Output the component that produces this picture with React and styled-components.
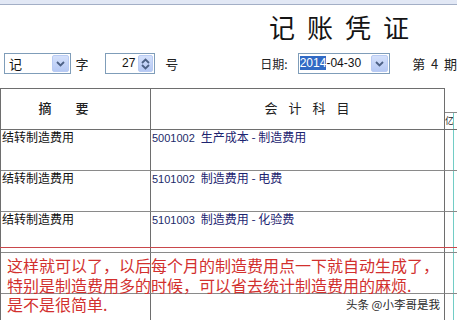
import React from 'react'
import styled, { createGlobalStyle } from 'styled-components'

const GlobalStyle = createGlobalStyle`
  html, body {
    margin: 0;
    padding: 0;
    background: #fff;
  }

  body {
    font-family: "Noto Sans CJK SC", "Liberation Sans", sans-serif;
    overflow: hidden;
  }
`

const rows = [
  { summary: '结转制造费用', code: '5001002', account: '生产成本 - 制造费用' },
  { summary: '结转制造费用', code: '5101002', account: '制造费用 - 电费' },
  { summary: '结转制造费用', code: '5101003', account: '制造费用 - 化验费' },
  { summary: '', code: '', account: '' },
  { summary: '', code: '', account: '' },
]

const Chevron = ({ up }) => (
  <svg width="9" height="6" viewBox="0 0 9 6">
    <polyline
      points={up ? '1,5 4.5,1.5 8,5' : '1,1 4.5,4.5 8,1'}
      fill="none"
      stroke="#4d6185"
      strokeWidth="1.8"
    />
  </svg>
)

const Page = styled.div`
  position: relative;
  width: 457px;
  height: 320px;
  overflow: hidden;
  background: #fff;
`

const TopStrip = styled.div`
  height: 4px;
  background: #e2e8f5;
  border-bottom: 1px solid #a3afc6;
`

const TitleRow = styled.div`
  display: flex;
  justify-content: flex-end;
  margin-top: 7px;
  padding-right: 36px;
`

const Title = styled.h1`
  margin: 0;
  font-size: 26px;
  line-height: 30px;
  font-weight: 400;
  letter-spacing: 12px;
  color: #141414;
`

const ToolBar = styled.div`
  display: flex;
  align-items: center;
  height: 21px;
  margin-top: 11px;
  padding-left: 4px;
`

const Label = styled.span`
  margin-left: ${p => p.$ml || 0}px;
  font-size: ${p => p.$size || 13}px;
  color: #222;
  white-space: pre;
`

const Field = styled.div`
  box-sizing: border-box;
  display: flex;
  align-items: center;
  width: ${p => p.$w}px;
  height: 21px;
  margin-left: ${p => p.$ml || 0}px;
  padding: 1px;
  border: 1px solid #7f9db9;
  background: #fff;
`

const FieldText = styled.span`
  flex: 1;
  padding: 0 ${p => p.$pr || 0}px 0 ${p => p.$pl || 0}px;
  text-align: ${p => p.$align || 'left'};
  font-family: ${p => (p.$latin ? '"Liberation Sans", sans-serif' : 'inherit')};
  font-size: ${p => p.$size || 13}px;
  line-height: 17px;
  color: #111;
`

const Selected = styled.span`
  background: #316ac5;
  color: #fff;
`

const DropButton = styled.div`
  box-sizing: border-box;
  display: flex;
  flex-direction: column;
  align-items: center;
  justify-content: center;
  width: ${p => p.$w || 17}px;
  height: 17px;
  border-radius: 2px;
  background: linear-gradient(#d4e0fb, #b6c9f4);
  border: 1px solid #b9cbf3;
`

const Table = styled.div`
  display: grid;
  grid-template-columns: 150px 294px 1fr;
  margin-top: 14px;
  border-left: 1px solid #6e6e6e;
`

const HeadCell = styled.div`
  box-sizing: border-box;
  display: flex;
  align-items: center;
  justify-content: center;
  height: 42px;
  padding: 0 0 3px ${p => p.$pl || 0}px;
  border-top: 1px solid #6e6e6e;
  border-right: 1px solid #6e6e6e;
  border-bottom: 1px solid #6e6e6e;
  font-size: 13px;
  font-weight: ${p => (p.$bold ? 500 : 400)};
  letter-spacing: ${p => p.$ls}px;
  color: #222;
`

const Cell = styled.div`
  box-sizing: border-box;
  height: 41px;
  padding: 0 0 0 ${p => p.$pl || 0}px;
  border-right: 1px solid #6e6e6e;
  border-bottom: 1px solid #8a8a8a;
  font-size: 12px;
  line-height: 14px;
  color: #111;
  white-space: nowrap;
`

const Code = styled.span`
  font-family: "Liberation Sans", sans-serif;
  font-size: 11px;
  color: #1c2a6a;
  margin-right: 6px;
`

const Account = styled.span`
  color: #1c2470;
`

const AmountHead = styled.div`
  display: flex;
  flex-direction: column;
  height: 42px;
  box-sizing: border-box;
  border-bottom: 1px solid #6e6e6e;
`

const AmountTop = styled.div`
  height: 24px;
  border-bottom: 1px solid #8a8a8a;
`

const AmountCells = styled.div`
  display: flex;
  height: ${p => p.$h}px;
  border-bottom: ${p => (p.$line ? '1px solid #8a8a8a' : 'none')};
  box-sizing: border-box;
`

const Digit = styled.div`
  box-sizing: border-box;
  width: 9px;
  flex: none;
  border-right: 1px solid #72cdc6;
  font-size: 9px;
  line-height: 15px;
  color: #222;
  overflow: hidden;
`

const Note = styled.div`
  position: absolute;
  left: 0;
  right: 0;
  top: 247px;
  padding: 8px 0 0 7px;
  border-top: 1px solid #c9474b;
  color: #d2302e;
  font-size: 16px;
  line-height: 19.5px;
`

const NoteLine = styled.div`
  white-space: nowrap;
`

const Watermark = styled.div`
  position: absolute;
  right: 17px;
  bottom: 8px;
  font-size: 11.5px;
  color: #2c2c2c;
  text-shadow: 0 0 2px #fff, 0 0 2px #fff;
`

const App = () => (
  <Page>
    <GlobalStyle />
    <TopStrip />
    <TitleRow>
      <Title>记账凭证</Title>
    </TitleRow>

    <ToolBar>
      <Field $w={67}>
        <FieldText $pl={3}>记</FieldText>
        <DropButton><Chevron /></DropButton>
      </Field>
      <Label $ml={5}>字</Label>
      <Field $w={51} $ml={16}>
        <FieldText $align="right" $pr={3} $latin $size={12}>27</FieldText>
        <DropButton $w={15}>
          <Chevron up />
          <Chevron />
        </DropButton>
      </Field>
      <Label $ml={10}>号</Label>
      <Label $ml={82} $size={12}>日期:</Label>
      <Field $w={93} $ml={10}>
        <FieldText $latin $size={12}>
          <Selected>2014</Selected>-04-30
        </FieldText>
        <DropButton><Chevron /></DropButton>
      </Field>
      <Label $ml={22}>第  4  期</Label>
    </ToolBar>

    <Table>
      <HeadCell $bold $ls={24}>摘要</HeadCell>
      <HeadCell $ls={11} $pl={30}>会计科目</HeadCell>
      <AmountHead>
        <AmountTop />
        <AmountCells $h={16}>
          <Digit>亿</Digit>
          <Digit />
        </AmountCells>
      </AmountHead>

      {rows.map((row, i) => (
        <React.Fragment key={i}>
          <Cell $pl={1}>{row.summary}</Cell>
          <Cell $pl={1}>
            {row.code && <Code>{row.code}</Code>}
            <Account>{row.account}</Account>
          </Cell>
          <AmountCells $h={41} $line>
            <Digit />
            <Digit />
          </AmountCells>
        </React.Fragment>
      ))}
    </Table>

    <Note>
      <NoteLine>这样就可以了，以后每个月的制造费用点一下就自动生成了，</NoteLine>
      <NoteLine>特别是制造费用多的时候，可以省去统计制造费用的麻烦.</NoteLine>
      <NoteLine>是不是很简单.</NoteLine>
    </Note>

    <Watermark>头条 @小李哥是我</Watermark>
  </Page>
)

export default App
